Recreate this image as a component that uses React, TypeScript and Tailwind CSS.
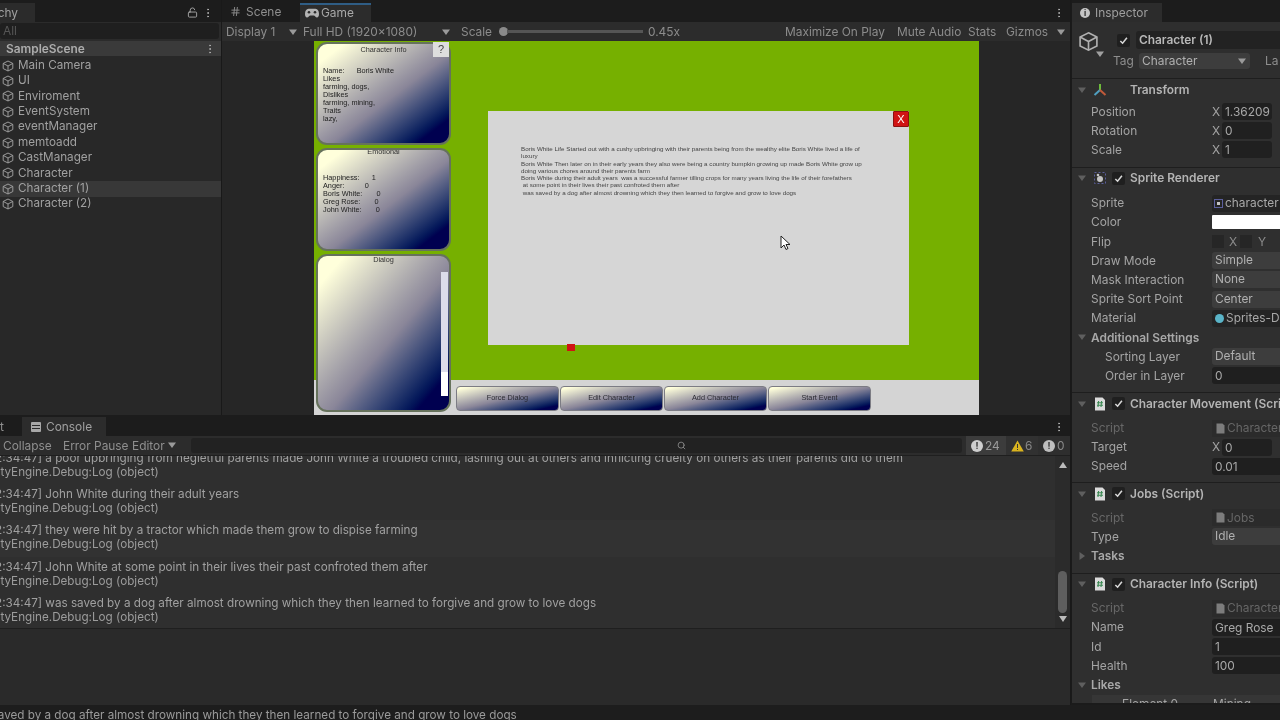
import React from "react";
import { EllipsisVertical, Hash, LockOpen, Search } from "lucide-react";

const Cube = ({ s = 12, c = "#a0a0a0" }: { s?: number; c?: string }) => (
  <svg width={s} height={s} viewBox="0 0 14 14" fill="none" stroke={c} strokeWidth="1.1" className="shrink-0">
    <path d="M7 1.2 12.6 4v6L7 12.8 1.4 10V4Z" />
    <path d="M1.4 4 7 7l5.6-3M7 7v5.8" />
  </svg>
);
const Caret = ({ c = "#9a9a9a", open = true }: { c?: string; open?: boolean }) => (
  <svg width="8" height="8" viewBox="0 0 8 8" className="shrink-0">
    <path d={open ? "M0 1.5h8L4 7Z" : "M1.5 0v8L7 4Z"} fill={c} />
  </svg>
);
const Check = () => (
  <div className="w-[13px] h-[13px] rounded-[2px] bg-[#1f1f1f] flex items-center justify-center shrink-0">
    <svg width="9" height="9" viewBox="0 0 10 10" fill="none" stroke="#d8d8d8" strokeWidth="1.7"><path d="M1.5 5.5 4 8l4.8-6" /></svg>
  </div>
);
const ScriptIcon = () => (
  <svg width="12" height="14" viewBox="0 0 12 14" className="shrink-0">
    <path d="M1 .5h7.5L11 3v10.5H1Z" fill="#dcdcdc" />
    <path d="M4.6 4 4 10M7.6 4 7 10M3 5.8h6M3 8.2h6" stroke="#3d8a55" strokeWidth="1.1" />
  </svg>
);
const MiniDoc = () => (
  <svg width="9" height="11" viewBox="0 0 9 11" className="shrink-0"><path d="M.5.5h6L8.5 2.5v8H.5Z" fill="#7c7c7c" /></svg>
);
const GamePad = () => (
  <svg width="14" height="10" viewBox="0 0 14 10" className="shrink-0">
    <path d="M3.5.8h7C12.6.8 14 3 14 6c0 2.2-.8 3.4-2 3.4-1.500 0-2-2-3.500-2h-3c-1.500 0-2 2-3.500 2C.8 9.400 0 8.200 0 6 0 3 1.400.8 3.500.8Z" fill="#b4b4b4" />
    <circle cx="4" cy="4.200" r="1.300" fill="#2c2c2c" /><circle cx="10" cy="4.200" r="1.300" fill="#2c2c2c" />
  </svg>
);

const hierarchy = ["Main Camera", "UI", "Enviroment", "EventSystem", "eventManager", "memtoadd", "CastManager", "Character", "Character (1)", "Character (2)"];

const Panel = ({ title, h, titlePad = "", children }: { title: string; h: string; titlePad?: string; children?: React.ReactNode }) => (
  <div className={`relative w-[135px] ${h} rounded-[11px] border-2 border-[#66725c] bg-linear-to-br from-[#ffffdb] from-10% via-[#8a8699] via-55% to-[#000050] to-88% text-[#222] text-[7.3px] leading-[8px] font-['Liberation_Sans',sans-serif] overflow-hidden`}>
    <div className={`text-center leading-[8px] text-[#333] ${titlePad}`}>{title}</div>
    {children}
  </div>
);

const GameBtn = ({ t }: { t: string }) => (
  <div className="w-[103px] h-[25px] rounded-[4px] border border-[#7c7c84] bg-linear-to-br from-[#ffffdb] from-5% via-[#8a8699] via-50% to-[#000050] to-90% flex items-center justify-center text-[7.3px] text-[#2b2b33] font-['Liberation_Sans',sans-serif]">{t}</div>
);

const modal = [
  "Boris White Life Started out with a cushy upbringing with their parents being from the wealthy elite Boris White lived a life of",
  "luxury",
  "Boris White Then later on in their early years they also were being a country bumpkin growing up made Boris White grow up",
  "doing various chores around their parents farm",
  "Boris White during their adult years  was a successful farmer tilling crops for many years living the life of their forefathers",
  " at some point in their lives their past confroted them after",
  " was saved by a dog after almost drowning which they then learned to forgive and grow to love dogs",
];

const GameView = () => (
  <div className="relative w-[665px] h-[374px] flex bg-[linear-gradient(#76b000_339px,#d4d4d4_339px)]">
    <div className="w-[139px] pl-[2px] pt-[1px] flex flex-col gap-[3px]">
      <div className="relative">
        <Panel title="Character Info" h="h-[103px]" titlePad="pt-[2px]">
          <div className="pl-[5px] pt-[13px] whitespace-pre">{"Name:      Boris White\nLikes\nfarming, dogs,\nDislikes\nfarming, mining,\nTraits\nlazy,"}</div>
        </Panel>
        <div className="absolute left-[117px] top-0 w-[16px] h-[15px] bg-[#dedede] text-[#444] text-[11px] leading-[15px] text-center font-['Liberation_Sans',sans-serif]">?</div>
      </div>
      <Panel title="Emotional" h="h-[103px]" titlePad="-mt-[2px]">
        <div className="pl-[5px] pt-[18px] whitespace-pre">{"Happiness:      1\nAnger:          0\nBoris White:       0\nGreg Rose:       0\nJohn White:       0"}</div>
      </Panel>
      <Panel title="Dialog" h="h-[158px]">
        <div className="absolute left-[123px] top-[16px] w-[7px] h-[124px] bg-[#dcdcea]">
          <div className="mt-[100px] h-[24px] bg-white" />
        </div>
      </Panel>
    </div>
    <div className="flex-1 flex flex-col pl-[3px]">
      <div className="ml-[32px] mt-[70px] w-[421px] h-[234px] bg-[#d6d6d6] relative font-['Liberation_Sans',sans-serif] text-[6.23px] leading-[7.25px] text-[#444] pl-[33px] pt-[34px] whitespace-pre">
        {modal.map((l, i) => <div key={i}>{l}</div>)}
        <div className="absolute right-0 top-0 w-[16px] h-[16px] bg-[#d01414] border border-[#8c1010] rounded-[1px] flex items-center justify-center text-white text-[11px] leading-none">X</div>
        <div className="absolute left-[79px] top-[233px] w-[8px] h-[7px] bg-[#d01414]" />
        <svg className="absolute left-[292px] top-[124px]" width="12" height="16" viewBox="0 0 12 16"><path d="M1 1v12l3-3 2 4.5 2-1-2-4h4Z" fill="#fff" stroke="#222" strokeWidth="1" /></svg>
      </div>
      <div className="mt-auto mb-[4px] flex gap-px">
        {["Force Dialog", "Edit Character", "Add Character", "Start Event"].map((t) => <GameBtn key={t} t={t} />)}
      </div>
    </div>
  </div>
);

const logs: [string, number][] = [
  ["[12:34:47]  a poor upbringing from negletful parents made John White a troubled child, lashing out at others and inflicting cruelty on others as their parents did to them", 0],
  ["[12:34:47]  John White during their adult years", 1],
  ["[12:34:47]  they were hit by a tractor which made them grow to dispise farming", 2],
  ["[12:34:47]  John White at some point in their lives their past confroted them after", 3],
  ["[12:34:47]  was saved by a dog after almost drowning which they then learned to forgive and grow to love dogs", 4],
];

const Row = ({ label, dim, indent, children }: { label: string; dim?: boolean; indent?: boolean; children?: React.ReactNode }) => (
  <div className="h-[19.2px] flex items-center shrink-0">
    <div className={`${indent ? "pl-[33px]" : "pl-[19px]"} w-[140px] shrink-0 truncate ${dim ? "text-[#686868]" : "text-[#a4a4a4]"}`}>{label}</div>
    <div className="flex-1 min-w-0 flex items-center h-[17px] overflow-hidden whitespace-nowrap">{children}</div>
  </div>
);
const Dark = ({ t, dim }: { t: string; dim?: boolean }) => (
  <div className={`flex-1 h-full rounded-l-[3px] bg-[#1f1f1f] pl-[3px] leading-[17px] ${dim ? "text-[#666]" : "text-[#a8a8a8]"}`}>{t}</div>
);
const Drop = ({ t }: { t: string }) => (
  <div className="flex-1 h-full rounded-l-[3px] bg-[#3d3d3d] pl-[3px] leading-[16px] text-[#b0b0b0]">{t}</div>
);
const XField = ({ v }: { v: string }) => (
  <>
    <span className="w-[10px] text-[#a4a4a4] shrink-0">X</span>
    <div className="w-[50px] h-full rounded-[3px] bg-[#202020] pl-[3px] leading-[17px] text-[#a8a8a8] shrink-0">{v}</div>
  </>
);
const CompHeader = ({ icon, title, mt = "mt-[7px]" }: { icon: React.ReactNode; title: string; mt?: string }) => (
  <div className={`h-[22px] flex items-center border-t border-[#1e1e1e] ${mt} pl-[6px] bg-[#2f2f2f] shrink-0`}>
    <Caret c="#5f5f5f" />
    <div className="w-[15px] ml-[6px] flex justify-center shrink-0">{icon}</div>
    <div className="ml-[5px]"><Check /></div>
    <span className="ml-[5px] font-semibold text-[#b4b4b4] whitespace-nowrap">{title}</span>
  </div>
);
const SubHead = ({ t, open = true }: { t: string; open?: boolean }) => (
  <div className="h-[19.2px] flex items-center pl-[6px] shrink-0">
    <Caret c="#5f5f5f" open={open} />
    <span className="ml-[5px] font-semibold text-[#a8a8a8]">{t}</span>
  </div>
);

const TransformIcon = () => (
  <svg width="14" height="14" viewBox="0 0 14 14" fill="none" strokeWidth="2">
    <path d="M7 7V1" stroke="#6dbb3a" /><path d="M7 7 1.5 12" stroke="#4f9fc0" /><path d="m7 7 5.5 5" stroke="#c05a3a" />
  </svg>
);
const SpriteIcon = () => (
  <svg width="14" height="14" viewBox="0 0 14 14" fill="none">
    <rect x="1.5" y="1.5" width="11" height="11" stroke="#5b5f9c" strokeDasharray="2 2" />
    <circle cx="7" cy="8" r="3" fill="#c4c4c4" /><circle cx="5" cy="4" r="1.3" fill="#c4c4c4" />
  </svg>
);

const Inspector = () => (
  <div className="w-[209px] h-[703px] bg-[#2f2f2f] overflow-hidden flex flex-col shrink-0 border-l border-[#1a1a1a]">
    <div className="h-[22px] bg-[#1c1c1c] flex items-end shrink-0">
      <div className="w-[90px] h-[19px] bg-[#2c2c2c] flex items-center gap-[5px] pl-[8px] text-[#9e9e9e]">
        <span className="w-[10px] h-[10px] rounded-full bg-[#c4c4c4] text-[#222] text-[8px] leading-[10px] text-center font-bold">i</span>Inspector
      </div>
    </div>
    <div className="h-[56px] flex shrink-0 bg-[#2e2e2e]">
      <div className="w-[45px] pl-[6px] pt-[9px] relative shrink-0">
        <Cube s={21} c="#b0b0b0" />
        <div className="absolute left-[24px] top-[28px]"><Caret c="#a0a0a0" /></div>
      </div>
      <div className="flex-1 min-w-0">
        <div className="flex items-center gap-[6px] h-[20px] mt-[8px]">
          <Check />
          <div className="flex-1 h-[18px] rounded-l-[3px] bg-[#222] pl-[3px] leading-[18px] font-semibold text-[#b8b8b8]">Character (1)</div>
        </div>
        <div className="flex items-center h-[20px] mt-[1px] -ml-[4px]">
          <span className="text-[#8e8e8e] w-[26px]">Tag</span>
          <div className="w-[111px] h-[16px] bg-[#3d3d3d] rounded-[3px] pl-[3px] pr-[4px] flex items-center justify-between text-[#b0b0b0]">Character<Caret /></div>
          <span className="ml-[15px] text-[#8e8e8e]">La</span>
        </div>
      </div>
    </div>
    <div className="border-t border-[#1e1e1e] h-[22px] flex items-center pl-[6px] shrink-0">
      <Caret c="#5f5f5f" />
      <div className="ml-[6px] w-[15px] flex justify-center"><TransformIcon /></div>
      <span className="ml-[23px] font-semibold text-[#b4b4b4]">Transform</span>
    </div>
    <div className="pt-[2px] shrink-0">
      <Row label="Position"><XField v="1.36209" /></Row>
      <Row label="Rotation"><XField v="0" /></Row>
      <Row label="Scale"><XField v="1" /></Row>
    </div>
    <CompHeader icon={<SpriteIcon />} title="Sprite Renderer" />
    <div className="pt-[5px] shrink-0">
      <Row label="Sprite"><div className="flex-1 h-full rounded-l-[3px] bg-[#242424] pl-[2px] flex items-center gap-[2px] text-[#a8a8a8]"><span className="w-[9px] h-[9px] border border-[#5b5f9c] flex items-center justify-center"><span className="w-[3px] h-[3px] bg-[#c4c4c4]" /></span>character</div></Row>
      <Row label="Color"><div className="flex-1 h-[14px] bg-white rounded-l-[1px]" /></Row>
      <Row label="Flip"><span className="w-[12px] h-[13px] bg-[#262626] shrink-0" /><span className="ml-[5px] w-[11px] text-[#8c8c8c]">X</span><span className="w-[12px] h-[13px] bg-[#262626] shrink-0" /><span className="ml-[6px] text-[#8c8c8c]">Y</span></Row>
      <Row label="Draw Mode"><Drop t="Simple" /></Row>
      <Row label="Mask Interaction"><Drop t="None" /></Row>
      <Row label="Sprite Sort Point"><Drop t="Center" /></Row>
      <Row label="Material"><div className="flex-1 h-full rounded-l-[3px] bg-[#242424] pl-[3px] flex items-center gap-[2px] text-[#a8a8a8]"><span className="w-[9px] h-[9px] rounded-full bg-[#5ab4c8] shrink-0" />Sprites-Default</div></Row>
      <SubHead t="Additional Settings" />
      <Row label="Sorting Layer" indent><Drop t="Default" /></Row>
      <Row label="Order in Layer" indent><Dark t="0" /></Row>
    </div>
    <CompHeader icon={<ScriptIcon />} title="Character Movement (Script)" />
    <div className="pt-[4px] shrink-0">
      <Row label="Script" dim><div className="flex-1 h-full bg-[#2b2b2b] pl-[4px] flex items-center gap-[2px] text-[#666]"><MiniDoc />Character</div></Row>
      <Row label="Target"><XField v="0" /></Row>
      <Row label="Speed"><Dark t="0.01" /></Row>
    </div>
    <CompHeader icon={<ScriptIcon />} title="Jobs (Script)" mt="mt-[6px]" />
    <div className="pt-[4px] shrink-0">
      <Row label="Script" dim><div className="flex-1 h-full bg-[#2b2b2b] pl-[4px] flex items-center gap-[2px] text-[#666]"><MiniDoc />Jobs</div></Row>
      <Row label="Type"><Drop t="Idle" /></Row>
      <SubHead t="Tasks" open={false} />
    </div>
    <CompHeader icon={<ScriptIcon />} title="Character Info (Script)" mt="mt-[7px]" />
    <div className="pt-[4px] shrink-0">
      <Row label="Script" dim><div className="flex-1 h-full bg-[#2b2b2b] pl-[4px] flex items-center gap-[2px] text-[#666]"><MiniDoc />Character</div></Row>
      <Row label="Name"><Dark t="Greg Rose" /></Row>
      <Row label="Id"><Dark t="1" /></Row>
      <Row label="Health"><Dark t="100" /></Row>
      <SubHead t="Likes" />
      <div className="h-[14px] ml-[20px] bg-[#363636] flex text-[#a4a4a4] pl-[30px] gap-[35px] whitespace-nowrap"><span>Element 0</span><span>Mining</span></div>
    </div>
  </div>
);

const TB = ({ t, w }: { t: string; w: string }) => <span className={`${w} shrink-0 whitespace-nowrap`}>{t}</span>;

export default function App() {
  return (
    <div className="w-[1280px] h-[720px] bg-[#1b1b1b] overflow-hidden flex flex-col font-['Inter',sans-serif] text-[11.9px] text-[#a0a0a0] blur-[0.5px]">
      <div className="h-[705px] flex shrink-0">
        <div className="w-[1071px] shrink-0 flex flex-col">
          <div className="h-[415px] flex shrink-0">
            {/* Hierarchy */}
            <div className="w-[222px] shrink-0 flex flex-col bg-[#282828] border-r border-[#191919]">
              <div className="h-[22px] bg-[#1c1c1c] flex items-center shrink-0 pr-[7px] pt-[3px]">
                <div className="w-[35px] h-[19px] bg-[#2b2b2b] overflow-hidden flex justify-end items-center pr-[17px]"><span className="whitespace-nowrap">Hierarchy</span></div>
                <LockOpen size={11} className="ml-auto text-[#a8a8a8]" />
                <EllipsisVertical size={12} className="ml-[4px] text-[#b0b0b0]" />
              </div>
              <div className="h-[19px] bg-[#2b2b2b] py-[1px] shrink-0">
                <div className="h-[16px] mr-[2px] bg-[#1f1f1f] rounded-[3px] pl-[3px] leading-[16px] text-[#555]">All</div>
              </div>
              <div className="h-[15px] bg-[#3a3a3a] flex items-center pl-[6px] pr-[5px] font-semibold text-[#adadad] shrink-0">
                SampleScene<EllipsisVertical size={12} className="ml-auto" />
              </div>
              <div className="flex flex-col pt-[2px]">
                {hierarchy.map((n) => (
                  <div key={n} className={`h-[15.4px] flex items-center gap-[4px] pl-[2px] text-[11.7px] ${n === "Character (1)" ? "bg-[#383838]" : ""}`}>
                    <Cube s={12} /><span className="whitespace-nowrap">{n}</span>
                  </div>
                ))}
              </div>
            </div>
            {/* Game */}
            <div className="flex-1 flex flex-col bg-[#262626] min-w-0 border-r border-[#191919]">
              <div className="h-[22px] bg-[#1c1c1c] flex items-end shrink-0 relative">
                <div className="w-[78px] h-[19px] flex items-center gap-[5px] pl-[8px] pb-[2px] text-[#8f8f8f]"><Hash size={11} />Scene</div>
                <div className="w-[71px] h-[19px] bg-[#2c2c2c] border-t-2 border-[#2f5d85] flex items-center gap-[2px] pl-[5px] pb-[2px] text-[#a8a8a8]"><GamePad />Game</div>
                <EllipsisVertical size={12} className="ml-auto mb-[3px] mr-[5px] text-[#b0b0b0]" />
              </div>
              <div className="h-[19px] bg-[#2c2c2c] flex items-center shrink-0 pl-[4px] whitespace-nowrap text-[#8c8c8c]">
                <TB t="Display 1" w="w-[63px]" />
                <Caret />
                <span className="w-[145px] shrink-0 pl-[6px]">Full HD (1920x1080)</span>
                <Caret />
                <span className="w-[38px] ml-[11px] shrink-0">Scale</span>
                <span className="w-[9px] h-[9px] rounded-full bg-[#8a8a8a] shrink-0" />
                <span className="w-[136px] h-[3px] bg-[#555] -ml-[1px] mr-[5px] shrink-0" />
                <TB t="0.45x" w="w-[137px]" />
                <TB t="Maximize On Play" w="w-[112px]" />
                <TB t="Mute Audio" w="w-[71px]" />
                <TB t="Stats" w="w-[38px]" />
                <TB t="Gizmos" w="w-[51px]" />
                <Caret />
              </div>
              <div className="pl-[92px]"><GameView /></div>
            </div>
          </div>
          {/* Console */}
          <div className="flex-1 flex flex-col min-h-0 border-r border-[#191919]">
            <div className="h-[21px] bg-[#1c1c1c] flex items-end shrink-0 pt-[2px]">
              <span className="w-[22px] overflow-hidden text-[#8f8f8f] flex justify-start h-[19px] leading-[19px]">t</span>
              <div className="w-[84px] h-[19px] bg-[#2c2c2c] flex items-center gap-[5px] pl-[9px] text-[#a0a0a0]">
                <span className="w-[10px] h-[10px] bg-[#a8a8a8] rounded-[1px] flex flex-col justify-center gap-[2px] px-[1px]"><span className="h-px bg-[#2c2c2c]" /><span className="h-px bg-[#2c2c2c]" /></span>Console
              </div>
              <EllipsisVertical size={12} className="ml-auto mb-[3px] mr-[5px] text-[#b0b0b0]" />
            </div>
            <div className="h-[19px] bg-[#2c2c2c] flex items-center shrink-0 whitespace-nowrap text-[#8f8f8f] border-b border-[#1f1f1f] box-content">
              <span className="w-[60px] pl-[3px] shrink-0">Collapse</span>
              <span className="w-[70px] pl-[3px] shrink-0">Error Pause</span>
              <span className="w-[47px] pl-[2px] flex items-center gap-[3px] shrink-0">Editor<Caret /></span>
              <div className="flex-1 h-[15px] bg-[#222] rounded-[3px] ml-[14px] mr-[4px] flex items-center justify-center pl-[210px]">
                <Search size={9} className="text-[#999]" />
              </div>
              <div className="w-[40px] h-full bg-[#3c3c3c] flex items-center gap-[2px] pl-[5px] text-[#999] shrink-0"><span className="w-[12px] h-[12px] rounded-full bg-[#cfcfcf] text-[#333] text-[9px] leading-[12px] text-center font-bold">!</span>24</div>
              <div className="w-[32px] h-full bg-[#313131] flex items-center gap-[1px] pl-[5px] text-[#888] shrink-0">
                <svg width="13" height="12" viewBox="0 0 13 12"><path d="M6.5.5 12.8 11.5H.2Z" fill="#d9b31f" /><path d="M6 4h1v4H6zM6 9h1v1H6z" fill="#333" /></svg>6
              </div>
              <div className="w-[32px] h-full bg-[#2e2e2e] flex items-center gap-[2px] pl-[5px] text-[#888] shrink-0"><span className="w-[12px] h-[12px] rounded-full bg-[#bdbdbd] text-[#333] text-[9px] leading-[12px] text-center font-bold">!</span>0</div>
            </div>
            <div className="flex h-[172px] shrink-0 bg-[#2f2f2f]">
              <div className="flex-1 min-w-0 overflow-hidden text-[11.7px]">
                <div className="-mt-[8px]">
                  {logs.map(([t, i]) => (
                    <div key={i} className={`h-[36.2px] pt-[3px] overflow-hidden whitespace-nowrap ${i === 2 ? "bg-[#323232]" : "bg-[#2f2f2f]"}`}>
                      <div className="-ml-[14px] leading-[14px] text-[#a0a0a0]">{t}</div>
                      <div className="-ml-[18px] leading-[14px] text-[#9c9c9c]">UnityEngine.Debug:Log (object)</div>
                    </div>
                  ))}
                </div>
              </div>
              <div className="w-[15px] shrink-0 bg-[#2b2b2b] flex flex-col items-center justify-between py-[6px] relative">
                <svg width="8" height="6" viewBox="0 0 8 6"><path d="M0 6h8L4 0Z" fill="#bcbcbc" /></svg>
                <div className="absolute bottom-[15px] left-[3px] w-[9px] h-[42px] rounded-[5px] bg-[#5e5e5e]" />
                <svg width="8" height="6" viewBox="0 0 8 6"><path d="M0 0h8L4 6Z" fill="#bcbcbc" /></svg>
              </div>
            </div>
            <div className="flex-1 bg-[#2a2a2a] border-t border-[#1f1f1f]" />
          </div>
        </div>
        <Inspector />
      </div>
      <div className="h-[15px] bg-[#1d1d1d] overflow-hidden whitespace-nowrap leading-[21px] text-[#9a9a9a] text-[11.7px]">
        <div className="-ml-[34px]">was saved by a dog after almost drowning which they then learned to forgive and grow to love dogs</div>
      </div>
    </div>
  );
}
